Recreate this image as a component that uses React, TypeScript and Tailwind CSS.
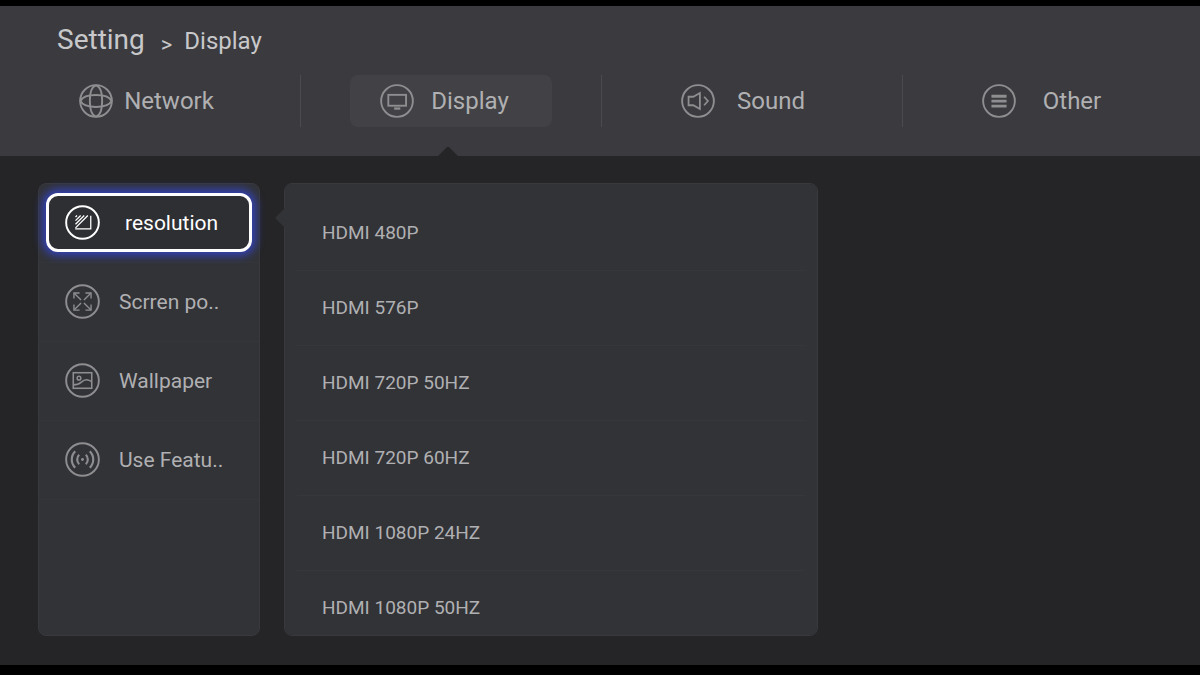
import { useState } from "react";
import type { ReactNode } from "react";
import clsx from "clsx";

function CircleIcon({ children, className }: { children: ReactNode; className?: string }) {
  return (
    <svg viewBox="0 0 36 36" fill="none" stroke="currentColor" strokeWidth="1.6" className={className} aria-hidden="true">
      <circle cx="18" cy="18" r="16.8" strokeWidth="2" />
      {children}
    </svg>
  );
}

const networkIcon = (
  <>
    <path d="M18 1.500c-3.500 1-6.500 6-6.500 16.500s3 15.500 6.500 16.500c3.500-1 6.500-6 6.500-16.500S21.500 2.500 18 1.500z" strokeWidth="2" />
    <path d="M1.500 18c2-4 6-6.300 16.500-6.300s14.500 2.300 16.500 6.300c-2 4-6 6.300-16.500 6.300S3.500 22 1.500 18z" strokeWidth="2" />
  </>
);

const displayIcon = (
  <>
    <rect x="8.8" y="11.5" width="18.8" height="11.5" strokeWidth="2" />
    <path d="M15 26h6.5" strokeWidth="2.4" />
  </>
);

const soundIcon = (
  <>
    <path d="M8 13.5h5l7-4v17l-7-4H8z" strokeWidth="1.9" />
    <path d="M24.5 13.5l4 4.5-4 4.5" strokeWidth="1.9" />
  </>
);

const otherIcon = <path d="M10 13h16M10 18.2h16M10 23.4h16" strokeWidth="3" />;

const resolutionIcon = (
  <>
    <path d="M26.5 11v13.5H10.5" strokeWidth="1.3" />
    <path d="M10.800 23.500L23.500 10.800M10.800 19.800L19.800 10.800M10.800 16.100L16.100 10.800M10.800 12.400l1.600-1.600" strokeWidth="1.3" />
  </>
);

const positionIcon = (
  <>
    <path d="M9.5 9.5l7 7M26.5 9.5l-7 7M9.5 26.5l7-7M26.5 26.5l-7-7" strokeWidth="1.4" />
    <path d="M9.2 15V9.2H15M21 9.2h5.8V15M9.2 21v5.8H15M21 26.8h5.8V21" strokeWidth="1.4" />
  </>
);

const wallpaperIcon = (
  <>
    <rect x="8.5" y="10" width="19" height="16" strokeWidth="1.6" />
    <circle cx="14.4" cy="15.6" r="1.9" strokeWidth="1.5" />
    <path d="M8.5 22.5c4 0 5.500-.4 8-2.600s4-2.900 6-2.700c2 .2 3.500 1 5 2" strokeWidth="1.6" />
  </>
);

const featureIcon = (
  <>
    <circle cx="18" cy="18" r="1.5" fill="currentColor" stroke="none" />
    <path d="M14.600 13.200a6.600 6.600 0 0 0 0 9.600M21.400 13.200a6.600 6.600 0 0 1 0 9.600" strokeWidth="2.2" />
    <path d="M10.500 9.500a12 12 0 0 0 0 17M25.500 9.500a12 12 0 0 1 0 17" strokeWidth="2.2" />
  </>
);

const tabs = [
  { label: "Network", icon: networkIcon },
  { label: "Display", icon: displayIcon },
  { label: "Sound", icon: soundIcon },
  { label: "Other", icon: otherIcon },
];

const menu = [
  { label: "resolution", icon: resolutionIcon },
  { label: "Scrren po..", icon: positionIcon },
  { label: "Wallpaper", icon: wallpaperIcon },
  { label: "Use Featu..", icon: featureIcon },
];

const resolutions = [
  "HDMI 480P",
  "HDMI 576P",
  "HDMI 720P 50HZ",
  "HDMI 720P 60HZ",
  "HDMI 1080P 24HZ",
  "HDMI 1080P 50HZ",
];

export default function App() {
  const [tab, setTab] = useState("Display");
  const [item, setItem] = useState("resolution");

  return (
    <div className="flex h-screen flex-col border-t-[6px] border-b-[10px] border-black bg-[#252527] font-[Roboto,sans-serif] text-[#b0b0b2]">
      <header className="overflow-hidden bg-[#3b3b3f] pt-[18px]">
        <div className="flex items-baseline pl-[57px] text-[#c8c8ca]">
          <h1 className="text-[28px] leading-8">Setting</h1>
          <span className="ml-4 self-end text-[22px] leading-6">&gt;</span>
          <span className="ml-3 text-2xl leading-8">{tab}</span>
        </div>

        {/* Top tabs */}
        <nav className="mt-[18px] -mr-1 grid grid-cols-4">
          {tabs.map(({ label, icon }) => (
            <div key={label} className="group flex flex-col items-center">
              <div className="flex w-full justify-center border-r border-[#4b4b4f] group-last:border-transparent">
                <button
                  onClick={() => setTab(label)}
                  className={clsx(
                    "flex h-[52px] w-[202px] items-center rounded-lg pr-[26px] pl-[30px] text-2xl",
                    tab === label && "bg-[#424246]"
                  )}
                >
                  <CircleIcon className="size-[34px] shrink-0 text-[#8e8e91]">{icon}</CircleIcon>
                  <span className="flex-1 text-center">{label}</span>
                </button>
              </div>
              {/* Notch under the open tab */}
              <svg
                viewBox="0 0 20 10"
                className={clsx("mt-[19px] mr-2 h-2.5 w-5 text-[#252527]", tab !== label && "invisible")}
                aria-hidden="true"
              >
                <path d="M0 10L8.500 1.500a2 2 0 0 1 3 0L20 10z" fill="currentColor" />
              </svg>
            </div>
          ))}
        </nav>
      </header>

      <main className="flex min-h-0 flex-1 gap-6 px-[38px] pt-[27px] pb-[29px]">
        <aside className="w-[222px] shrink-0 rounded-lg border border-[#38393c] bg-[#323337]">
          <ul>
            {menu.map(({ label, icon }) => (
              <li key={label} className="flex h-[79px] items-center border-b border-[#35363a] px-[7px] pb-0.5">
                <button
                  onClick={() => setItem(label)}
                  className={clsx(
                    "flex h-[59px] w-full items-center rounded-xl border-[3px] pl-4 text-[21px]",
                    item === label
                      ? "gap-[25px] border-white bg-[#2e2f33] text-white shadow-[0_0_8px_4px_#3342b4]"
                      : "gap-[19px] border-transparent"
                  )}
                >
                  <CircleIcon className={clsx("size-[35px] shrink-0", item !== label && "text-[#8e8e91]")}>{icon}</CircleIcon>
                  <span className="pt-1">{label}</span>
                </button>
              </li>
            ))}
          </ul>
        </aside>

        <section className="relative w-[47.5%]">
          <svg viewBox="0 0 10 20" className="absolute top-[25px] -left-[9px] h-5 w-2.5 text-[#323337]" aria-hidden="true">
            <path d="M10 0v20L1 11a1.500 1.500 0 0 1 0-2z" fill="currentColor" />
          </svg>
          <ul className="h-full overflow-y-auto rounded-lg border border-[#38393c] bg-[#323337] px-3 pt-3 [scrollbar-width:none]">
            {resolutions.map((name) => (
              <li key={name} className="border-b border-[#36373b] last:border-transparent">
                <button className="h-[74px] w-full pl-[25px] text-left text-[19px]">{name}</button>
              </li>
            ))}
          </ul>
        </section>
      </main>
    </div>
  );
}
